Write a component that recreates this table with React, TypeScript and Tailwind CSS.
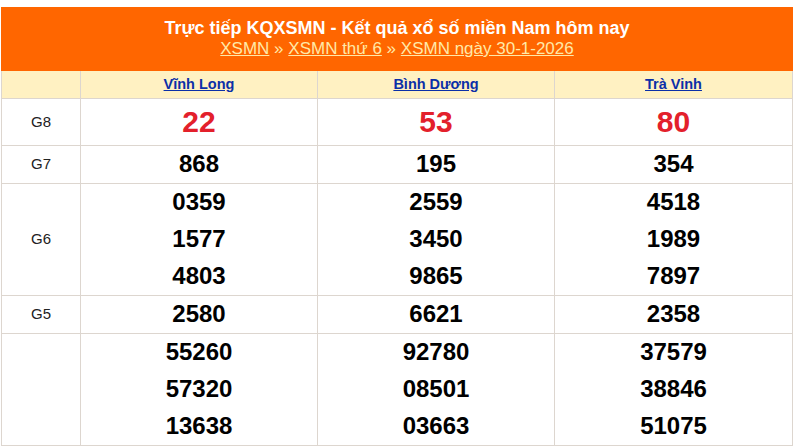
const provinces = ["Vĩnh Long", "Bình Dương", "Trà Vinh"];

const rows: { label: string; values: string[][]; special?: boolean }[] = [
  { label: "G8", values: [["22"], ["53"], ["80"]], special: true },
  { label: "G7", values: [["868"], ["195"], ["354"]] },
  {
    label: "G6",
    values: [
      ["0359", "1577", "4803"],
      ["2559", "3450", "9865"],
      ["4518", "1989", "7897"],
    ],
  },
  { label: "G5", values: [["2580"], ["6621"], ["2358"]] },
  {
    label: "G4",
    values: [
      ["55260", "57320", "13638"],
      ["92780", "08501", "03663"],
      ["37579", "38846", "51075"],
    ],
  },
];

export default function App() {
  return (
    <div className="w-[793px] h-[446px] overflow-hidden bg-white pt-[7px] font-['Liberation_Sans',Arial,sans-serif]">
      {/* Title bar */}
      <div className="ml-px w-[792px] h-[64px] bg-[#ff6600] flex flex-col items-center pt-[10px]">
        <h2 className="text-white font-bold text-[18px] leading-[22px]">
          Trực tiếp KQXSMN - Kết quả xổ số miền Nam hôm nay
        </h2>
        <div className="text-[17px] leading-[20px] text-[#ffe9a8]">
          <a className="underline">XSMN</a> » <a className="underline">XSMN thứ 6</a> »{" "}
          <a className="underline">XSMN ngày 30-1-2026</a>
        </div>
      </div>

      {/* Result table */}
      <div className="ml-px w-[792px] grid grid-cols-[79px_237px_237px_1fr] border-l border-[#ddd6cf]">
        <div className="h-[28px] bg-[#fff1c2] border-r border-b border-[#ddd6cf]" />
        {provinces.map((p) => (
          <div
            key={p}
            className="h-[28px] bg-[#fff1c2] border-r border-b border-[#ddd6cf] flex items-center justify-center"
          >
            <a className="text-[14.5px] font-bold text-[#0b2fa8] underline">{p}</a>
          </div>
        ))}

        {rows.map((r) => (
          <div key={r.label} className="contents">
            <div className="border-r border-b border-[#ddd6cf] flex items-center justify-center text-[15px] text-[#222]">
              {r.label !== "G4" && r.label}
            </div>
            {r.values.map((col, i) => (
              <div
                key={i}
                className={`border-r border-b border-[#ddd6cf] flex flex-col items-center ${
                  r.special ? "h-[47px] justify-center" : ""
                }`}
              >
                {col.map((v) => (
                  <div
                    key={v}
                    className={
                      r.special
                        ? "text-[30px] leading-[36px] font-bold text-[#e3202b]"
                        : "h-[37px] pb-[1px] flex items-center text-[24px] font-bold text-black"
                    }
                  >
                    {v}
                  </div>
                ))}
              </div>
            ))}
          </div>
        ))}
      </div>
    </div>
  );
}
